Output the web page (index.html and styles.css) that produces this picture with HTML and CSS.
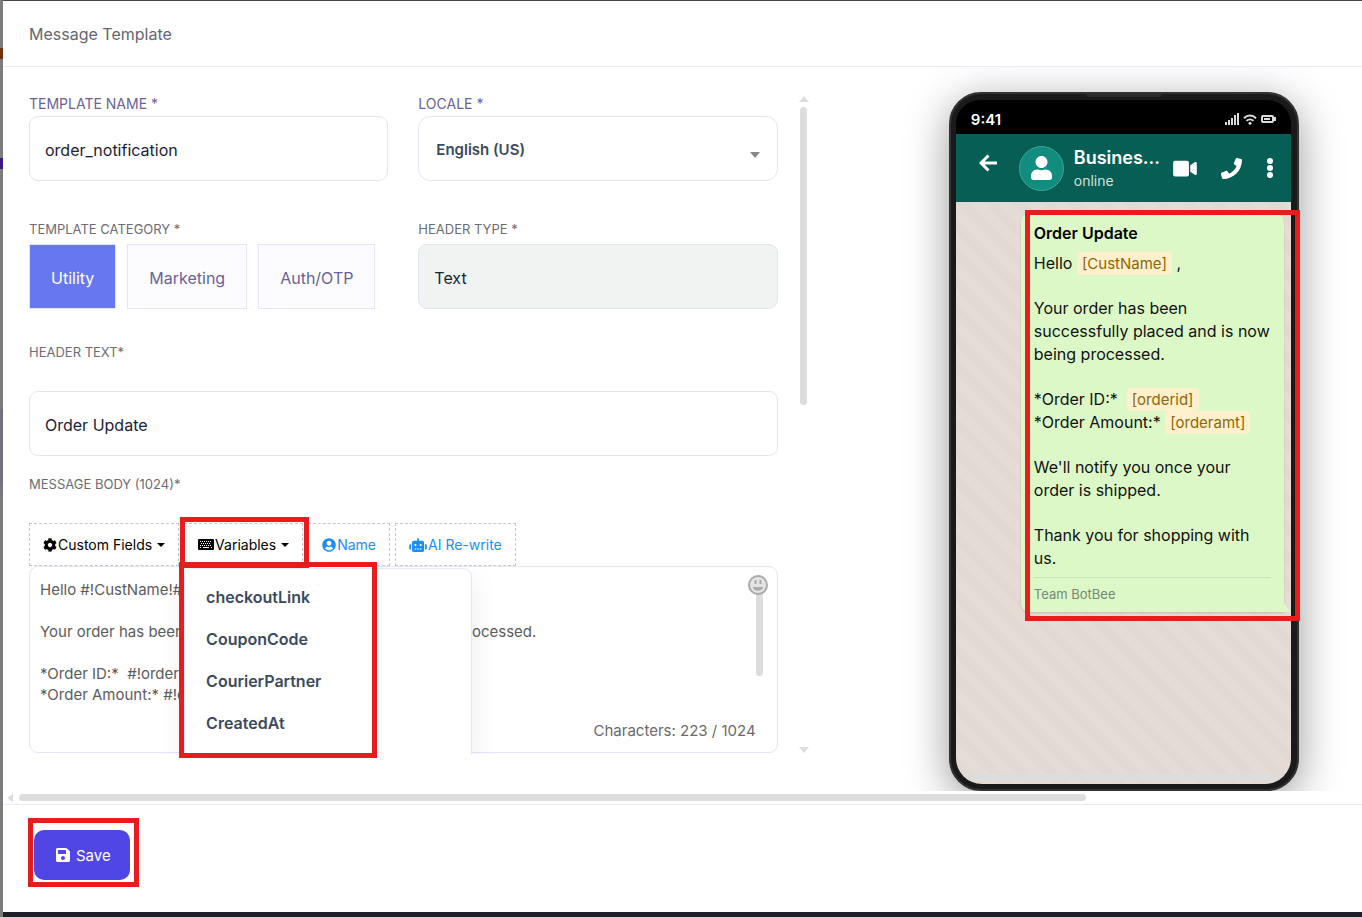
FILE: index.html
```html
<!DOCTYPE html>
<html lang="en">
<head>
    <meta charset="UTF-8">
    <title>Message Template</title>
    <meta name="viewport" content="width=device-width, initial-scale=1.0">
    <link rel="stylesheet" href="styles.css">
</head>
<body>

<div class="modal">
    <header class="modal-header">
        <h1>Message Template</h1>
    </header>

    <main class="modal-body">
        <form class="form-pane" id="templateForm">
            <div class="row">
                <div class="field">
                    <label for="templateName" class="label label-main">TEMPLATE NAME *</label>
                    <input type="text" class="control" id="templateName" value="order_notification">
                </div>
                <div class="field">
                    <label for="locale" class="label label-main">LOCALE *</label>
                    <div class="select-wrap">
                        <select class="control" id="locale">
                            <option>English (US)</option>
                        </select>
                        <svg class="select-arrow" viewBox="0 0 10 6"><path d="M0 0h10L5 6z"/></svg>
                    </div>
                </div>
            </div>

            <div class="row row-category">
                <div class="field">
                    <span class="label" id="categoryLabel">TEMPLATE CATEGORY *</span>
                    <div class="categories" role="group" aria-labelledby="categoryLabel">
                        <button type="button" class="category active">Utility</button>
                        <button type="button" class="category">Marketing</button>
                        <button type="button" class="category">Auth/OTP</button>
                    </div>
                </div>
                <div class="field">
                    <label for="headerType" class="label">HEADER TYPE *</label>
                    <input type="text" class="control" id="headerType" value="Text" readonly>
                </div>
            </div>

            <div class="field field-header">
                <label for="headerText" class="label">HEADER TEXT*</label>
                <input type="text" class="control" id="headerText" value="Order Update">
            </div>

            <div class="field field-body">
                <label for="messageBody" class="label">MESSAGE BODY (1024)*</label>
                <div class="toolbar">
                    <button type="button" class="tool">
                        <svg class="icon" viewBox="0 0 512 512"><path d="M487.4 315.7l-42.6-24.6c4.3-23.2 4.3-47 0-70.2l42.6-24.6c4.9-2.8 7.1-8.6 5.5-14-11.1-35.6-30-67.8-54.7-94.6-3.8-4.1-10-5.1-14.8-2.3L380.8 110c-17.9-15.4-38.5-27.3-60.8-35.1V25.8c0-5.6-3.9-10.5-9.4-11.7-36.7-8.2-74.3-7.8-109.2 0-5.5 1.2-9.4 6.1-9.4 11.7V75c-22.2 7.9-42.8 19.8-60.8 35.1L88.7 85.5c-4.9-2.8-11-1.9-14.8 2.3-24.7 26.7-43.6 58.9-54.7 94.6-1.7 5.4.6 11.2 5.5 14L67.3 221c-4.3 23.2-4.3 47 0 70.2l-42.6 24.6c-4.9 2.8-7.1 8.6-5.5 14 11.1 35.6 30 67.8 54.7 94.6 3.8 4.1 10 5.1 14.8 2.3l42.6-24.6c17.9 15.4 38.5 27.3 60.8 35.1v49.2c0 5.6 3.9 10.5 9.4 11.7 36.7 8.2 74.3 7.8 109.2 0 5.5-1.2 9.4-6.1 9.4-11.7v-49.2c22.2-7.9 42.8-19.8 60.8-35.1l42.6 24.6c4.9 2.8 11 1.9 14.8-2.3 24.7-26.7 43.6-58.9 54.7-94.6 1.5-5.5-.7-11.3-5.6-14.1zM256 336c-44.1 0-80-35.9-80-80s35.9-80 80-80 80 35.9 80 80-35.9 80-80 80z"/></svg>
                        Custom Fields
                        <span class="caret"></span>
                    </button>
                    <div class="dropdown">
                        <button type="button" class="tool" aria-expanded="true">
                            <svg class="icon icon-keyboard" viewBox="0 0 16 11">
                                <rect width="16" height="11" rx="1"/>
                                <path class="keys" d="M2 2.5h12M2 6.5h12" stroke-dasharray="1 1"/>
                                <path class="keys" d="M3 4.5h10" stroke-dasharray="1 1"/>
                                <path class="keys" d="M2 8.5h1M5 8.5h6M13 8.5h1"/>
                            </svg>
                            Variables
                            <span class="caret"></span>
                        </button>
                        <ul class="dropdown-menu">
                            <li><a href="#">checkoutLink</a></li>
                            <li><a href="#">CouponCode</a></li>
                            <li><a href="#">CourierPartner</a></li>
                            <li><a href="#">CreatedAt</a></li>
                        </ul>
                        <span class="mark mark-menu"></span>
                        <span class="mark mark-variables"></span>
                    </div>
                    <button type="button" class="tool tool-blue">
                        <svg class="icon" viewBox="0 0 496 512"><path d="M248 8C111 8 0 119 0 256s111 248 248 248 248-111 248-248S385 8 248 8zm0 96c48.600 0 88 39.400 88 88s-39.400 88-88 88-88-39.400-88-88 39.400-88 88-88zm0 344c-58.700 0-111.300-26.600-146.500-68.200 18.800-35.400 55.600-59.800 98.500-59.800 2.400 0 4.800.4 7.100 1.100 13 4.200 26.600 6.900 40.900 6.900 14.300 0 28-2.700 40.900-6.900 2.300-.7 4.700-1.100 7.100-1.100 42.900 0 79.700 24.400 98.500 59.800C359.300 421.400 306.700 448 248 448z"/></svg>
                        Name
                    </button>
                    <button type="button" class="tool tool-blue">
                        <svg class="icon icon-robot" viewBox="0 0 640 512"><path d="M32 224h32v192H32a32 32 0 0 1-32-32V256a32 32 0 0 1 32-32zm512-48v272a64 64 0 0 1-64 64H160a64 64 0 0 1-64-64V176a80 80 0 0 1 80-80h112V32a32 32 0 0 1 64 0v64h112a80 80 0 0 1 80 80zM264 256a40 40 0 1 0-40 40 40 40 0 0 0 40-40zm-8 128h-64v32h64zm96 0h-64v32h64zm104-128a40 40 0 1 0-40 40 40 40 0 0 0 40-40zm-8 128h-64v32h64zm192-128v128a32 32 0 0 1-32 32h-32V224h32a32 32 0 0 1 32 32z"/></svg>
                        AI Re-write
                    </button>
                </div>
                <div class="editor">
                    <textarea id="messageBody">Hello #!CustName!# ,

Your order has been successfully placed and is now being processed.

*Order ID:*  #!orderid!#
*Order Amount:* #!orderamt!#

We'll notify you once your order is shipped.

Thank you for shopping with us.</textarea>
                    <div class="editor-scroll"></div>
                    <button type="button" class="emoji" aria-label="Insert emoji">
                        <svg viewBox="0 0 20 20">
                            <circle cx="10" cy="10" r="9" fill="#e4e4e4" stroke="#aaa" stroke-width="2"/>
                            <path d="M7.500 5v4M12.500 5v4" stroke="#aaa" stroke-width="2"/>
                            <path d="M5 12h10c0 5-10 5-10 0z" fill="#aaa"/>
                        </svg>
                    </button>
                    <div class="counter">Characters: 223 / 1024</div>
                </div>
            </div>
        </form>

        <div class="vscroll">
            <svg viewBox="0 0 10 6"><path d="M5 0l5 6H0z"/></svg>
            <div class="vscroll-track"><div class="vscroll-thumb"></div></div>
            <svg viewBox="0 0 10 6"><path d="M0 0h10L5 6z"/></svg>
        </div>

        <section class="preview">
            <div class="phone">
                <div class="speaker"></div>
                <div class="status">
                    <span>9:41</span>
                    <div class="status-icons">
                        <svg width="14" height="12" viewBox="0 0 14 12"><path d="M0 9h2v3H0zM3 7h2v5H3zM6 5h2v7H6zM9 2h2v10H9zM12 0h2v12h-2z"/></svg>
                        <svg width="14" height="11" viewBox="0 0 14 11"><path class="line" d="M1 4.300c3.500-3.600 8.500-3.600 12 0M3.500 6.900c2-2 5-2 7 0"/><circle cx="7" cy="9.300" r="1.500"/></svg>
                        <svg width="15" height="8" viewBox="0 0 15 8"><rect class="line" x="1" y="1" width="11" height="6" rx="1"/><path d="M3 3h6v2H3zM12.500 2H15v4h-2.500z"/></svg>
                    </div>
                </div>
                <div class="chat-header">
                    <svg class="back" viewBox="0 0 18 18"><path d="M9.500 1.500L2 9l7.500 7.500M2.500 9H18"/></svg>
                    <div class="avatar">
                        <svg viewBox="0 0 448 512"><path d="M224 256c70.700 0 128-57.300 128-128S294.700 0 224 0 96 57.300 96 128s57.300 128 128 128zm89.600 32h-16.700c-22.200 10.200-46.900 16-72.900 16s-50.600-5.800-72.900-16h-16.700C60.200 288 0 348.200 0 422.400V464c0 26.500 21.500 48 48 48h352c26.500 0 48-21.500 48-48v-41.600c0-74.200-60.200-134.400-134.400-134.400z"/></svg>
                    </div>
                    <div class="contact">
                        <div class="contact-name">Busines...</div>
                        <div class="contact-status">online</div>
                    </div>
                    <svg class="call-icon" width="24" height="21" viewBox="0 0 576 512"><path d="M336.200 64H47.800C21.400 64 0 85.400 0 111.800v288.400C0 426.600 21.400 448 47.800 448h288.400c26.400 0 47.800-21.400 47.800-47.800V111.800c0-26.400-21.400-47.800-47.800-47.800zm189.400 37.700L416 177.300v157.400l109.600 75.500c21.200 14.600 50.400-.3 50.400-25.800V127.500c0-25.400-29.100-40.400-50.400-25.800z"/></svg>
                    <svg class="call-icon" width="21" height="21" viewBox="0 0 512 512"><path d="M493.400 24.600l-104-24c-11.300-2.600-22.900 3.300-27.500 13.900l-48 112c-4.200 9.800-1.400 21.300 6.900 28l60.600 49.600c-36 76.700-98.900 140.500-177.200 177.200l-49.600-60.600c-6.800-8.300-18.200-11.100-28-6.900l-112 48C3.900 366.500-2 378.100.6 389.400l24 104C27.100 504.200 36.700 512 48 512c256.100 0 464-207.500 464-464 0-11.200-7.700-20.900-18.600-23.400z"/></svg>
                    <svg class="call-icon" width="8" height="20" viewBox="0 0 8 20"><circle cx="4" cy="3" r="3"/><circle cx="4" cy="10" r="3"/><circle cx="4" cy="17" r="3"/></svg>
                </div>
                <div class="chat">
                    <div class="bubble">
                        <h2>Order Update</h2>
                        <p>Hello <span class="var">[CustName]</span> ,</p>
                        <p>Your order has been successfully placed and is now being processed.</p>
                        <p>*Order ID:*&nbsp; <span class="var">[orderid]</span><br>*Order Amount:* <span class="var">[orderamt]</span></p>
                        <p>We'll notify you once your order is shipped.</p>
                        <p>Thank you for shopping with us.</p>
                        <div class="bubble-footer">Team BotBee</div>
                        <svg class="tail" viewBox="0 0 8 10"><path d="M0 0l8 10H0z"/></svg>
                        <span class="mark mark-bubble"></span>
                    </div>
                    <div class="chat-scroll"></div>
                </div>
            </div>
        </section>
    </main>

    <div class="hscroll">
        <svg viewBox="0 0 6 8"><path d="M6 0v8L0 4z"/></svg>
        <div class="hscroll-thumb"></div>
    </div>

    <footer class="modal-footer">
        <div class="save-wrap">
            <button type="submit" form="templateForm" class="save">
                <svg viewBox="0 0 448 512"><path d="M433.941 129.941l-83.882-83.882A48 48 0 0 0 316.118 32H48C21.490 32 0 53.490 0 80v352c0 26.510 21.490 48 48 48h352c26.510 0 48-21.490 48-48V163.882a48 48 0 0 0-14.059-33.941zM224 416c-35.346 0-64-28.654-64-64 0-35.346 28.654-64 64-64s64 28.654 64 64c0 35.346-28.654 64-64 64zm96-304.520V212c0 6.627-5.373 12-12 12H76c-6.627 0-12-5.373-12-12V108c0-6.627 5.373-12 12-12h228.520c3.183 0 6.235 1.264 8.485 3.515l3.480 3.480A11.996 11.996 0 0 1 320 111.480z"/></svg>
                Save
            </button>
            <span class="mark mark-save"></span>
        </div>
    </footer>
</div>

</body>
</html>
```
FILE: styles.css
```css
:root {
    --border: #e2e6f0;
    --scroll: #ddd;
    --text: #1b2236;
    --slate: #3a4a60;
    --purple: #6b6199;
    --mark: #e81c1c;
    --font-lg: 18px;
    --font-md: 16px;
    --font-base: 15px;
    --font-sm: 14px;
    --font-xs: 13px;
}

* {
    box-sizing: border-box;
}

/* dimmed page shows at the left edge */
body {
    margin: 0;
    height: 100vh;
    padding-left: 3px;
    font-family: Inter, "Liberation Sans", sans-serif;
    font-size: var(--font-base);
    color: var(--text);
    background: linear-gradient(#7c7c7e 48px, #6b3510 48px, #6b3510 59px, #7c7c7e 59px, #7c7c7e 158px, #3a1c80 158px, #3a1c80 169px, #7c7c7e 169px, #7c7c7e 409px, #74717f 409px, #74717f 480px, #7c7c7e 500px);
    overflow: hidden;
}

button, input, select, textarea {
    font: inherit;
    color: inherit;
}

h1, h2, p, ul {
    margin: 0;
    padding: 0;
}

.modal {
    height: 100%;
    display: flex;
    flex-direction: column;
    background: #fff;
    border-top: 1px solid #45454b;
    border-bottom: 5px solid #1e1f27;
}

.modal-header {
    flex: none;
    height: 66px;
    padding: 0 26px;
    display: flex;
    align-items: center;
    border-bottom: 1px solid #e6edf4;
}

.modal-header h1 {
    font-size: var(--font-md);
    font-weight: 400;
    color: #66666e;
}

.modal-body {
    flex: 1;
    min-height: 0;
    display: flex;
    overflow: hidden;
}

/* form */
.form-pane {
    width: 57%;
    padding: 27px 0 0 26px;
}

.row {
    display: grid;
    grid-template-columns: 1fr 1fr;
    gap: 30px;
}

.row-category {
    margin-top: 38px;
}

.field-header {
    margin-top: 33px;
}

.field-body {
    margin-top: 18px;
}

.label {
    display: block;
    margin-bottom: 5px;
    font-size: var(--font-xs);
    line-height: 20px;
    color: #6c6c74;
}

.label-main {
    margin-bottom: 2px;
    font-size: var(--font-sm);
    color: var(--purple);
}

.field-header .label,
.field-body .label {
    margin-bottom: 29px;
}

.control {
    display: block;
    width: 100%;
    height: 65px;
    padding: 2px 15px 0;
    border: 1px solid var(--border);
    border-radius: 9px;
    background: #fff;
    font-size: var(--font-md);
    outline: none;
}

.control[readonly] {
    background: #f1f3f3;
}

.select-wrap {
    position: relative;
}

.select-wrap select {
    appearance: none;
    padding: 2px 17px 0;
    border-radius: 12px;
    font-size: var(--font-base);
    font-weight: 600;
    color: var(--slate);
}

.select-arrow {
    position: absolute;
    right: 18px;
    top: 36px;
    width: 10px;
    fill: #888;
}

.categories {
    display: flex;
    gap: 11px;
}

.category {
    height: 65px;
    padding: 2px 21px 0;
    border: 1px solid #e4e4fb;
    background: #fcfcff;
    font-size: var(--font-md);
    color: var(--purple);
}

.category.active {
    background: #6777ef;
    color: #fff;
}

/* toolbar */
.toolbar {
    display: flex;
    gap: 5px;
}

.tool {
    height: 43px;
    padding: 0 13px;
    display: flex;
    align-items: center;
    gap: 1px;
    border: 1px dashed #c8c8c8;
    background: #fff;
    font-size: var(--font-sm);
    color: #000;
    white-space: nowrap;
}

.tool-blue {
    color: #1890f5;
}

.icon {
    width: 14px;
    height: 14px;
    fill: currentColor;
}

.icon-keyboard {
    width: 16px;
    height: 11px;
}

.icon-robot {
    width: 18px;
}

.keys {
    fill: none;
    stroke: #fff;
}

.caret {
    margin-left: 4px;
    border: 4px solid transparent;
    border-top-color: currentColor;
    border-bottom: 0;
}

.dropdown {
    position: relative;
    z-index: 2;
}

.dropdown-menu {
    position: absolute;
    left: 0;
    top: 45px;
    width: 288px;
    height: 186px;
    padding-top: 7px;
    list-style: none;
    background: #fff;
    border: 1px solid #e6e6f6;
    border-bottom: 0;
    border-radius: 9px 9px 0 0;
    box-shadow: 0 10px 30px rgba(0, 0, 0, 0.08);
    clip-path: inset(0 -40px 0 -40px);
}

.dropdown-menu a {
    display: block;
    height: 42px;
    padding-left: 21px;
    line-height: 42px;
    font-size: var(--font-md);
    font-weight: 600;
    color: var(--slate);
    text-decoration: none;
}

/* red callouts */
.mark {
    position: absolute;
    border: 5px solid var(--mark);
    pointer-events: none;
}

.mark-variables {
    inset: -6px -6px -2px -4px;
}

.mark-menu {
    left: -5px;
    top: 39px;
    width: 198px;
    height: 196px;
}

.mark-bubble {
    inset: -4px -16px -9px 4px;
}

.mark-save {
    inset: -12px -9px -7px -6px;
}

/* editor */
.editor {
    position: relative;
    height: 187px;
    border: 1px solid #e4e4fb;
    border-radius: 9px;
}

.editor textarea {
    display: block;
    width: 100%;
    height: 150px;
    padding: 12px 40px 0 10px;
    border: 0;
    outline: none;
    resize: none;
    overflow: hidden;
    background: none;
    line-height: 21px;
    color: #5c5c5c;
}

.editor-scroll {
    position: absolute;
    right: 14px;
    top: 18px;
    width: 7px;
    height: 91px;
    border-radius: 4px;
    background: var(--scroll);
}

.emoji {
    position: absolute;
    right: 9px;
    top: 8px;
    width: 20px;
    height: 20px;
    padding: 0;
    border: 0;
    background: none;
}

.emoji svg {
    display: block;
}

.counter {
    padding-right: 21px;
    text-align: right;
    line-height: 28px;
    color: #6a6a6a;
}

/* scrollbars */
.vscroll {
    width: 10px;
    margin: 29px 0 38px 21px;
    display: flex;
    flex-direction: column;
    align-items: center;
    fill: var(--scroll);
}

.vscroll svg {
    width: 10px;
    height: 6px;
}

.vscroll-track {
    flex: 1;
    padding: 5px 0;
}

.vscroll-thumb {
    width: 7px;
    height: 47%;
    border-radius: 4px;
    background: var(--scroll);
}

.hscroll {
    flex: none;
    height: 13px;
    padding: 0 4px;
    display: flex;
    align-items: center;
    gap: 6px;
    fill: var(--scroll);
}

.hscroll svg {
    width: 6px;
    height: 8px;
}

.hscroll-thumb {
    width: 79%;
    height: 7px;
    border-radius: 4px;
    background: var(--scroll);
}

/* phone preview */
.preview {
    flex: 1;
    padding: 25px 0 0 77px;
    display: flex;
    justify-content: center;
}

.phone {
    position: relative;
    width: 350px;
    padding: 6px 6px 5px 5px;
    display: flex;
    flex-direction: column;
    border: 2px solid #333;
    border-radius: 32px;
    background: #1a1a1a;
    box-shadow: 0 10px 44px rgba(0, 0, 0, 0.4);
}

.speaker {
    position: absolute;
    left: 50%;
    top: 0;
    width: 76px;
    height: 3px;
    margin-left: -38px;
    border-radius: 0 0 6px 6px;
    background: #2a2a2a;
}

.status {
    height: 34px;
    padding: 4px 15px 0;
    display: flex;
    align-items: center;
    justify-content: space-between;
    border-radius: 24px 24px 0 0;
    background: #000;
    color: #fff;
    font-size: var(--font-base);
    font-weight: 600;
}

.status-icons {
    display: flex;
    align-items: center;
    gap: 4px;
    fill: #ddd;
}

.line {
    fill: none;
    stroke: #ddd;
    stroke-width: 2;
}

.chat-header {
    height: 68px;
    padding: 0 17px 0 23px;
    display: flex;
    align-items: center;
    background: #075e54;
    color: #fff;
}

.back {
    width: 18px;
    height: 18px;
    margin: 0 22px 10px 0;
    fill: none;
    stroke: #fff;
    stroke-width: 3;
}

.avatar {
    width: 45px;
    height: 45px;
    display: flex;
    align-items: center;
    justify-content: center;
    border: 1px solid #3fa497;
    border-radius: 50%;
    background: #128c7e;
}

.avatar svg {
    width: 21px;
    fill: #fff;
}

.contact {
    width: 90px;
    margin: 2px 9px 0 10px;
}

.contact-name {
    white-space: nowrap;
    font-size: var(--font-lg);
    font-weight: 600;
    line-height: 24px;
}

.contact-status {
    font-size: var(--font-sm);
    line-height: 22px;
    color: #cde0dd;
}

.call-icon {
    flex: none;
    fill: #fff;
}

.call-icon + .call-icon {
    margin-left: auto;
}

.chat {
    position: relative;
    flex: 1;
    padding: 12px 7px 0 65px;
    border-radius: 0 0 26px 26px;
    background: repeating-linear-gradient(45deg, #e5dcd5 0, #e5dcd5 10px, #e2d9d3 10px, #e2d9d3 20px);
}

.bubble {
    position: relative;
    padding: 8px 13px 7px;
    border-radius: 8px 8px 0 8px;
    background: #dcf8c6;
    box-shadow: 0 1px 2px rgba(0, 0, 0, 0.15);
    color: #111;
}

.bubble h2 {
    margin-bottom: 7px;
    font-size: var(--font-md);
    font-weight: 600;
    line-height: 23px;
    color: #000;
}

.bubble p {
    font-size: var(--font-md);
    line-height: 23px;
}

.bubble p + p {
    margin-top: 22px;
}

.var {
    padding: 2px 5px;
    border-radius: 4px;
    background: #fff0cd;
    font-size: var(--font-base);
    color: #8d6708;
}

.bubble-footer {
    margin-top: 7px;
    padding-top: 5px;
    border-top: 1px solid #c8e2b8;
    font-size: var(--font-xs);
    line-height: 22px;
    color: #76877f;
}

.tail {
    position: absolute;
    right: -7px;
    bottom: 0;
    width: 8px;
    fill: #dcf8c6;
}

.chat-scroll {
    position: absolute;
    left: 15px;
    right: 17px;
    bottom: 3px;
    height: 7px;
    border-radius: 4px;
    background: var(--scroll);
}

/* footer */
.modal-footer {
    flex: none;
    height: 108px;
    padding: 25px 31px;
    border-top: 1px solid #e6edf4;
}

.save-wrap {
    position: relative;
    display: inline-block;
}

.save {
    height: 50px;
    padding: 0 19px 0 22px;
    display: flex;
    align-items: center;
    gap: 6px;
    border: 0;
    border-radius: 10px;
    background: #4f46e5;
    color: #fff;
}

.save svg {
    width: 14px;
    height: 16px;
    fill: #fff;
}
```
